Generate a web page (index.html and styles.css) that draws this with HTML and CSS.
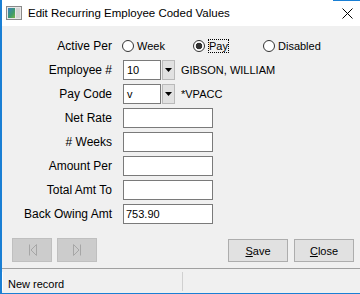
FILE: index.html
```html
<!DOCTYPE html>
<html lang="en">
<head>
  <meta charset="UTF-8" />
  <title>Edit Recurring Employee Coded Values</title>
  <link rel="stylesheet" href="styles.css">
</head>
<body>
  <div class="window">
    <div class="titlebar">
      <svg class="app-icon" width="16" height="14" viewBox="0 0 16 14">
        <defs>
          <linearGradient id="pane" x1="0" y1="0" x2="1" y2="1">
            <stop offset="0" stop-color="#3b7fc4" />
            <stop offset="0.6" stop-color="#3f9b6a" />
            <stop offset="1" stop-color="#7ab648" />
          </linearGradient>
        </defs>
        <rect x="0.5" y="0.5" width="15" height="13" fill="#e8e8e8" stroke="#8a8a8a" />
        <rect x="2" y="2" width="7" height="10" fill="url(#pane)" />
        <rect x="10" y="2" width="4" height="10" fill="#d4d4d4" />
      </svg>
      <span class="title">Edit Recurring Employee Coded Values</span>
      <svg class="close" width="11" height="11" viewBox="0 0 11 11">
        <path d="M0.5 0.5 L10.5 10.5 M10.5 0.5 L0.5 10.5" stroke="#000" stroke-width="1" fill="none" />
      </svg>
    </div>

    <div class="form">
      <label class="lbl">Active Per</label>
      <div class="radios">
        <span class="radio"><span class="circle"></span>Week</span>
        <span class="radio checked"><span class="circle"></span><span class="focus">Pay</span></span>
        <span class="radio"><span class="circle"></span>Disabled</span>
      </div>

      <label class="lbl">Employee #</label>
      <div class="field">
        <div class="combo">
          <span class="combo-text">10</span>
          <span class="combo-btn"><svg width="7" height="4" viewBox="0 0 7 4"><path d="M0 0 H7 L3.5 4 Z" fill="#000" /></svg></span>
        </div>
        <span class="desc">GIBSON, WILLIAM</span>
      </div>

      <label class="lbl">Pay Code</label>
      <div class="field">
        <div class="combo">
          <span class="combo-text">v</span>
          <span class="combo-btn"><svg width="7" height="4" viewBox="0 0 7 4"><path d="M0 0 H7 L3.5 4 Z" fill="#000" /></svg></span>
        </div>
        <span class="desc">*VPACC</span>
      </div>

      <label class="lbl">Net Rate</label>
      <div class="field"><span class="box"></span></div>

      <label class="lbl"># Weeks</label>
      <div class="field"><span class="box"></span></div>

      <label class="lbl">Amount Per</label>
      <div class="field"><span class="box"></span></div>

      <label class="lbl">Total Amt To</label>
      <div class="field"><span class="box"></span></div>

      <label class="lbl">Back Owing Amt</label>
      <div class="field"><span class="box">753.90</span></div>
    </div>

    <div class="buttons">
      <span class="nav">
        <svg width="9" height="12" viewBox="0 0 9 12"><path d="M1.5 0.5 V11.5 M8.5 0.5 L3 6 L8.5 11.5 Z" stroke="#a6a6a6" fill="none" /></svg>
      </span>
      <span class="nav">
        <svg width="9" height="12" viewBox="0 0 9 12"><path d="M7.5 0.5 V11.5 M0.5 0.5 L6 6 L0.5 11.5 Z" stroke="#a6a6a6" fill="none" /></svg>
      </span>
      <span class="spacer"></span>
      <button class="btn"><u>S</u>ave</button>
      <button class="btn"><u>C</u>lose</button>
    </div>

    <div class="statusbar">
      <div class="panel first">New record</div>
      <div class="panel"></div>
    </div>
  </div>
</body>
</html>
```

FILE: styles.css
```css
* {
  box-sizing: border-box;
}
body {
  margin: 0;
  background: #f0f0f0;
  font-family: "Liberation Sans", Arial, sans-serif;
  font-size: 11px;
  color: #000;
}
.window {
  width: 360px;
  height: 294px;
  display: flex;
  flex-direction: column;
  background: #f0f0f0;
  border-left: 2px solid #1a7fd4;
  border-bottom: 1px solid #1a7fd4;
  overflow: hidden;
}
.titlebar {
  flex: none;
  height: 26px;
  display: flex;
  align-items: center;
  padding-left: 4px;
  background: linear-gradient(to right, #fff 331px, #1a7fd4 331px) top / 100% 1px no-repeat, #fff;
}
.app-icon {
  flex: none;
}
.title {
  margin-left: 6px;
  font-size: 11.5px;
  white-space: nowrap;
}
.close {
  margin-left: auto;
  margin-right: 7px;
}
.form {
  display: grid;
  grid-template-columns: 110px auto;
  grid-auto-rows: 20px;
  column-gap: 11px;
  row-gap: 4px;
  padding-top: 10px;
}
.lbl {
  font-size: 12px;
  text-align: right;
  align-self: center;
  white-space: nowrap;
}
.field {
  display: flex;
  align-items: center;
}
.radios {
  display: flex;
  align-items: center;
  margin-left: -1px;
}
.radio {
  display: flex;
  align-items: center;
  width: 71px;
}
.radio:nth-child(2) {
  width: 70px;
}
.circle {
  width: 12px;
  height: 12px;
  margin-right: 3px;
  border: 1px solid #333;
  border-radius: 50%;
  background: #fff;
}
.radio.checked .circle {
  background: radial-gradient(circle, #333 0 3px, #fff 3.6px);
}
.focus {
  padding: 1px 1px;
  outline: 1px dotted #000;
  outline-offset: -1px;
}
.combo {
  display: flex;
  width: 52px;
  height: 20px;
}
.combo-text {
  flex: 1;
  display: flex;
  align-items: center;
  padding-left: 3px;
  background: #fff;
  border: 1px solid #7a7a7a;
}
.combo-btn {
  width: 13px;
  display: flex;
  align-items: center;
  justify-content: center;
  margin-left: 1px;
  background: #e1e1e1;
  border: 1px solid #b9b9b9;
}
.desc {
  margin-left: 6px;
  white-space: nowrap;
}
.box {
  width: 90px;
  height: 20px;
  display: flex;
  align-items: center;
  padding-left: 2px;
  background: #fff;
  border: 1px solid #7a7a7a;
}
.buttons {
  display: flex;
  align-items: flex-start;
  padding: 14px 6px 0 10px;
}
.nav {
  width: 40px;
  height: 24px;
  display: flex;
  align-items: center;
  justify-content: center;
  background: #cccccc;
  border: 1px solid #bfbfbf;
}
.nav + .nav {
  margin-left: 5px;
}
.spacer {
  flex: 1;
}
.btn {
  width: 60px;
  height: 23px;
  margin-top: 1px;
  padding: 0;
  font-family: inherit;
  font-size: 11px;
  color: #000;
  background: #e1e1e1;
  border: 1px solid #adadad;
}
.btn + .btn {
  margin-left: 6px;
}
.statusbar {
  margin-top: auto;
  height: 25px;
  display: flex;
  border-top: 1px solid #a0a0a0;
}
.panel {
  display: flex;
  align-items: center;
  padding: 3px 0 0 5px;
}
.panel.first {
  width: 181px;
  margin: 3px 0 2px;
  padding-top: 4px;
  border-left: 1px solid #fff;
  border-right: 1px solid #d0d0d0;
}
```
